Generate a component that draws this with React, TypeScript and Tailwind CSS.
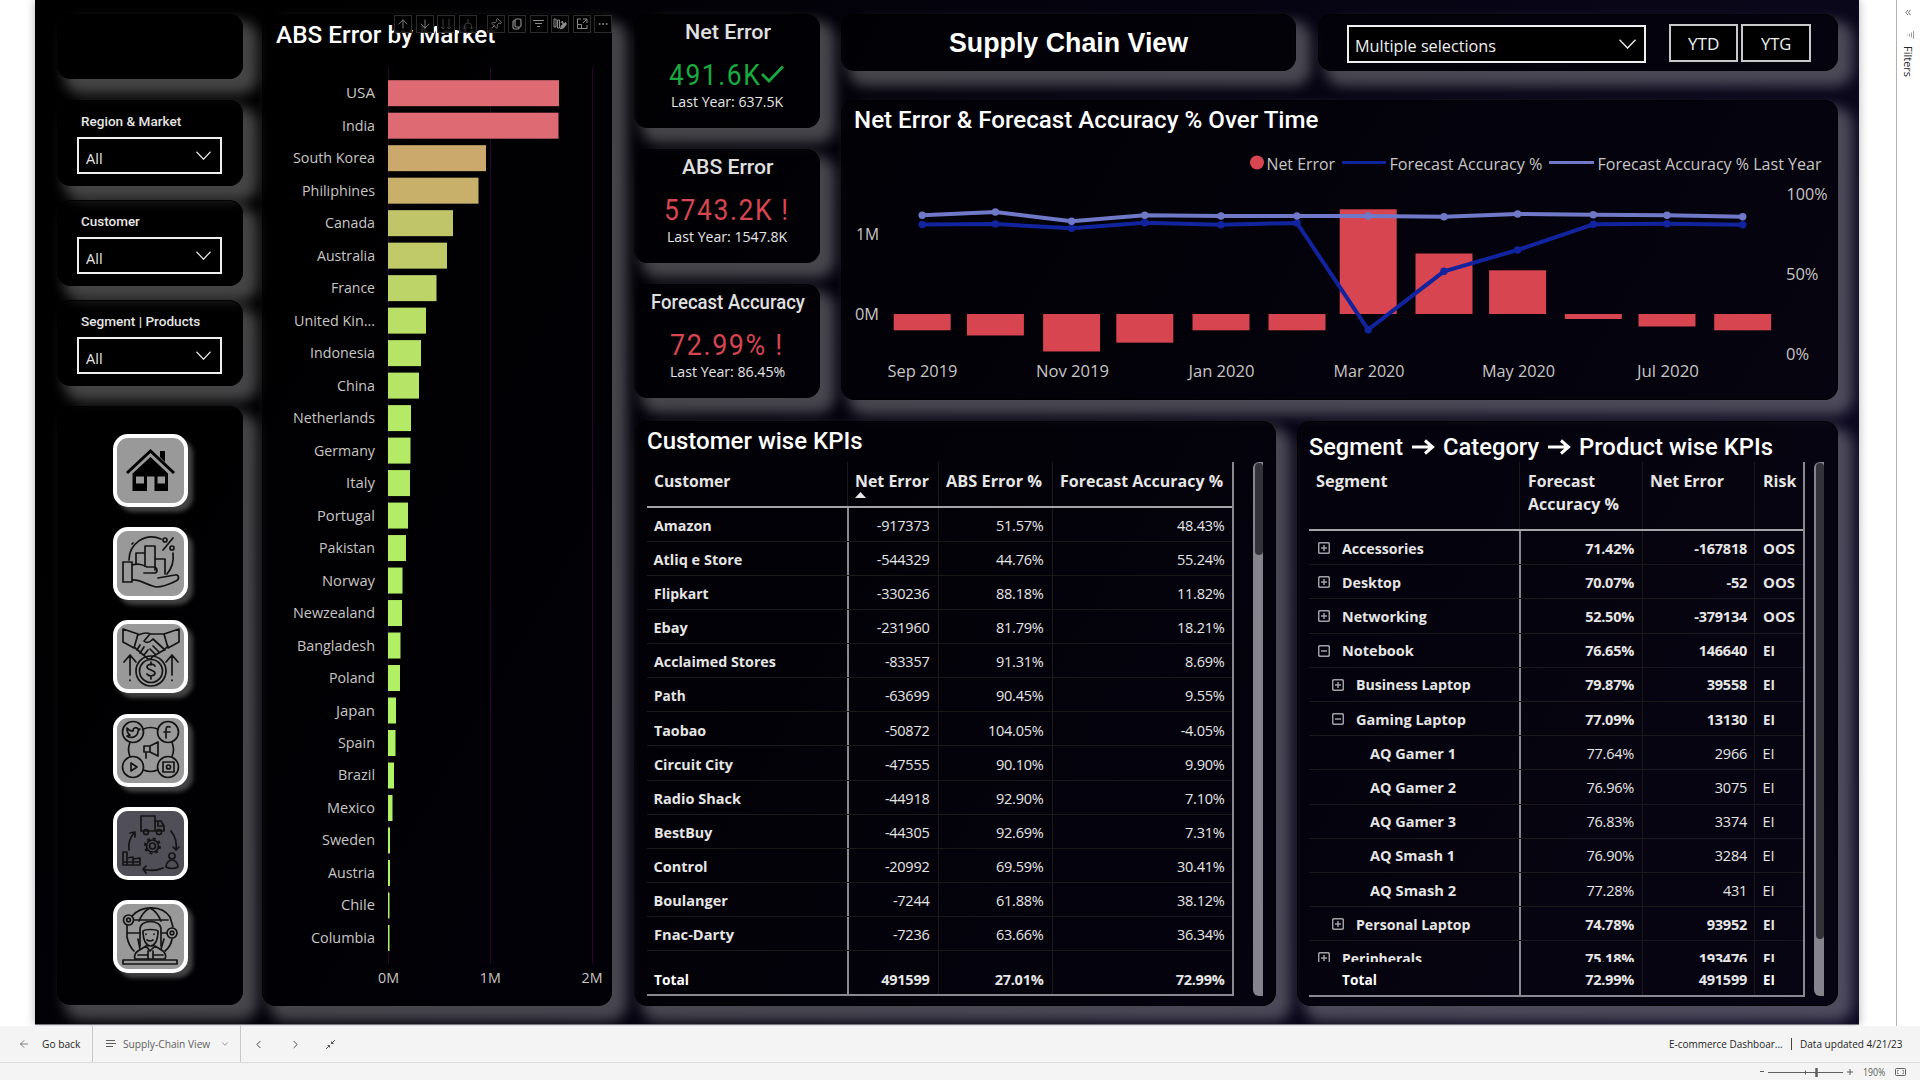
import React, { useLayoutEffect, useRef, useState } from 'react';
import { ArrowUp, ArrowDown, Pin, Ellipsis, ArrowLeft, ChevronDown, ChevronLeft, ChevronRight } from 'lucide-react';

const SEGOE = "font-['Open_Sans','Noto_Sans',sans-serif]";
const DIN = "font-['Roboto',sans-serif]";

/** One line of text stretched or narrowed to an exact width. */
function Fit({ w, className = '', children }: { w: number; className?: string; children: React.ReactNode }) {
  const ref = useRef<HTMLSpanElement>(null);
  const [s, setS] = useState(1);
  useLayoutEffect(() => {
    if (ref.current) setS(w / ref.current.offsetWidth);
  }, [w]);
  return (
    <span className={`inline-block whitespace-nowrap ${className}`} style={{ width: w }}>
      <span ref={ref} className="inline-block origin-left" style={{ transform: `scaleX(${s})` }}>{children}</span>
    </span>
  );
}

function Panel({ className = '', children }: { className?: string; children?: React.ReactNode }) {
  return (
    <div className={`shrink-0 rounded-[14px] border border-black/80 bg-black/45 shadow-[11px_11px_13px_4px_rgba(255,255,255,0.27)] ${className}`}>
      {children}
    </div>
  );
}

function Chevron({ w, h }: { w: number; h: number }) {
  return (
    <svg width={w} height={h} viewBox="0 0 16 9" preserveAspectRatio="none" fill="none" stroke="#e8e8e8" strokeWidth="1.3">
      <path d="M0.5 0.7 8 8.2 15.5 0.7" />
    </svg>
  );
}

function Slicer({ title, w }: { title: string; w: number }) {
  return (
    <Panel className="h-[86px] w-[186px] pl-[19px] pt-[13px]">
      <div className={`h-[16px] pl-1 text-[13px] leading-[16px] font-medium text-[#e6e6e6] ${DIN}`}><Fit w={w}>{title}</Fit></div>
      <div className={`mt-[7px] flex h-[37px] w-[145px] items-center justify-between border-2 border-[#f0f0f0] bg-black pl-[7px] pr-[9px] text-[15px] text-[#e6e6e6] ${SEGOE}`}>
        <span className="pt-[6px]"><Fit w={16.5}>All</Fit></span>
        <Chevron w={15} h={9} />
      </div>
    </Panel>
  );
}

const I = { fill: 'none', stroke: '#141414', strokeWidth: 1.7, strokeLinecap: 'round' as const, strokeLinejoin: 'round' as const };

function HomeIcon() {
  return (
    <svg width="65" height="62" viewBox="0 0 65 62">
      <path d="M9 34 32.5 12 56 34" fill="none" stroke="#000" strokeWidth="3" />
      <path d="M42 12h5v11l-5-5z" />
      <path fillRule="evenodd" d="M32.5 18 50 34.5V52H36.5V37.500H29V52H14.500V34.500zM18 37.500V44.500h8V37.500zM39.500 37.500V44.500h7.500V37.500z" />
    </svg>
  );
}
function FinanceIcon() {
  return (
    <svg width="65" height="62" viewBox="0 0 65 62" {...I}>
      <path d="M5 30h9v20H5zM14 33c7-2 11 0 15 2h7c4 1 4 6 0 6H26M14 48c8-1 14 5 24 7 8 0 14-3 20-6 4-2 3-7-1-6l-17 3" />
      <path d="M18 32V21h9M27 34V14h10v24M37 27h10v15M11 28C11 12 27 0 43 7M14 12l1-1M55 21c1 8-1 15-6 21" />
      <circle cx="47" cy="8" r="2" /><circle cx="54" cy="16" r="2" /><path d="m55 6-10 12" />
    </svg>
  );
}
function SalesIcon() {
  return (
    <svg width="65" height="62" viewBox="0 0 65 62" {...I}>
      <path d="m5 3 15 5-4 14L5 16zM61 3 46 8l4 14 11-6zM20 9c5-2 9-3 12-1l14 0M16 21l13 11c2 2 5 1 5-1l12-7 4-4M32 8l-6 7c3 3 6 1 9-2l12 11M22 19l-3 5M26 21l-4 6M30 24l-4 5M35 20l6 6M32 23l5 5" />
      <circle cx="33" cy="45" r="15" /><circle cx="33" cy="45" r="11.500" />
      <path d="M37 40c-2-3-8-2-8 1s8 3 8 6-6 4-8 1M33 36v3M33 50v3M12 49V29M6 36l6-7 6 7M54 49V29M48 36l6-7 6 7M12 54v.5M54 54v.5" />
    </svg>
  );
}
function MarketingIcon() {
  return (
    <svg width="65" height="62" viewBox="0 0 65 62" {...I}>
      <circle cx="15" cy="13" r="10.500" /><circle cx="50" cy="13" r="10.500" /><circle cx="15" cy="48" r="10.500" /><circle cx="50" cy="48" r="10.500" />
      <path d="M25.500 10q7-3 14 0M25.500 51q7 3 14 0M12 23.500q-3 7 0 14M54 23.500q3 7 0 14" />
      <path d="M9 9c2 3 5 3 6 3 0-4 4-4 5-2l2 0-2 2c0 6-7 8-11 5l3-1c-2-1-3-4-3-7zM52 8c-3-1-4 0-4 3v8M46 13h6M13 44v8l6-4zM45 43h11v10H45z" />
      <circle cx="50.500" cy="48" r="2" /><path d="M26 27h6v6h-6zM32 27l8-4v14l-8-4M28 33v6" />
    </svg>
  );
}
function SupplyIcon() {
  return (
    <svg width="65" height="63" viewBox="0 0 65 63" {...I}>
      <path d="M23 4h14v15H23zM37 9h6l3 5v5h-9M40 9v5h6" />
      <circle cx="28" cy="20" r="2.500" /><circle cx="41" cy="20" r="2.500" />
      <circle cx="34.500" cy="34" r="6" /><circle cx="34.500" cy="34" r="3" />
      <circle cx="34.500" cy="34" r="7.500" strokeWidth="2" strokeDasharray="2.900 3" strokeLinecap="butt" />
      <path d="M11 38c-1-7 1-13 6-18l-5 1M17 20v5M53 19c4 5 6 12 5 19l-3-3M58 38l3-3M45 56c-7 3-14 3-20 1l3-3M25 57l3 4M5 53V40h4v6l6-1v2l7-1v7zM9 46v7M15 47v6M5 50h17" />
      <circle cx="54" cy="44" r="3" /><path d="M48 55c0-4 3-7 6-7s6 3 6 7q-6 3-12 0z" />
    </svg>
  );
}
function ExecutiveIcon() {
  return (
    <svg width="65" height="63" viewBox="0 0 65 63" {...I}>
      <path d="M5 55h54v4H5zM9 20v12c1 5 3 10 7 14M14 11C24 0 44 0 52 12l3 10M54 34c-1 6-3 9-7 12M32 3c-6 3-9 8-11 13M32 3c6 3 9 8 11 13M16 15h34M10 28h12M44 28h5M20 34l2 10M46 34l-3 10" />
      <circle cx="10.500" cy="15" r="5" /><circle cx="10.500" cy="15" r="1.800" /><circle cx="54" cy="28" r="5" /><circle cx="54" cy="28" r="1.800" />
      <path d="M22 41V24c0-10 21-10 21 0v17M25 26c0 20 15 20 15 0-2-2-13-2-15 0zM29 35q3 2 6 0M28 29v.3M36 29v.3M28 41l4 5 5-5 8 5c3 3 3 6 2 8H17c-1-3 0-6 3-8zM30 46v8M35 46v8M20 50h9M36 50h9" />
    </svg>
  );
}

function NavTile({ active, children }: { active?: boolean; children: React.ReactNode }) {
  return (
    <div className={`flex h-[73px] w-[75px] shrink-0 items-center justify-center overflow-hidden rounded-[15px] border-[4.5px] border-white ${active ? 'bg-[#504f57]' : 'bg-[#999] shadow-[5px_5px_4px_rgba(255,255,255,0.26)]'}`}>
      {children}
    </div>
  );
}

const markets: [string, number, string, number][] = [
  ['USA', 171, '#de6a73', 29], ['India', 170.5, '#de6a73', 33], ['South Korea', 98, '#cba86b', 82], ['Philiphines', 90.5, '#c8b06b', 73],
  ['Canada', 65, '#c1c569', 50], ['Australia', 59, '#c0ca69', 58], ['France', 48.5, '#bdd469', 44], ['United Kin...', 38, '#b9df67', 81],
  ['Indonesia', 33, '#b7e366', 65], ['China', 31, '#b6e466', 38], ['Netherlands', 23, '#b4ea66', 82], ['Germany', 22.5, '#b4ea66', 61],
  ['Italy', 22, '#b4eb66', 29], ['Portugal', 20, '#b3ec66', 58], ['Pakistan', 18, '#b3ed66', 56], ['Norway', 14.5, '#b2ef66', 53],
  ['Newzealand', 14, '#b2ef66', 82], ['Bangladesh', 12.5, '#b1f065', 78], ['Poland', 12, '#b1f065', 46], ['Japan', 8, '#b0f265', 39],
  ['Spain', 7.5, '#b0f265', 37], ['Brazil', 6, '#b0f365', 37], ['Mexico', 4.5, '#b0f365', 48], ['Sweden', 2, '#b0f465', 53],
  ['Austria', 2, '#b0f465', 47], ['Chile', 1.5, '#b0f465', 34], ['Columbia', 1.5, '#b0f465', 64],
];

function MarketChart() {
  return (
    <svg width="348" height="944" viewBox="263 50 348 944" className={SEGOE} fontSize="15" fill="#c8c6c4">
      {[388.5, 490.5, 592.5].map((x) => <path key={x} d={`M${x} 67V964`} stroke="#2b0430" />)}
      {markets.map(([n, w, c, tw], i) => {
        const y = 93.2 + i * 32.49;
        return (
          <g key={n}>
            <text x={375 - tw} y={y + 5} textLength={tw} lengthAdjust="spacingAndGlyphs">{n}</text>
            <rect x="388" y={y - 13} width={w} height="26" fill={c} />
          </g>
        );
      })}
      {['0M', '1M', '2M'].map((t, i) => <text key={t} x={378 + i * 101.8} y="983" textLength="21" lengthAdjust="spacingAndGlyphs">{t}</text>)}
    </svg>
  );
}

function ToolBox({ children }: { children?: React.ReactNode }) {
  return <span className="flex h-[18px] w-[18px] items-center justify-center border border-[#2c2c2c] bg-black/90 text-[#8c8c8c]">{children}</span>;
}

function VisualToolbar() {
  return (
    <div className="absolute top-0 -right-px flex">
      <div className="flex gap-[3.500px]">
        <ToolBox><ArrowUp size={14} strokeWidth={1.5} /></ToolBox>
        <ToolBox><ArrowDown size={14} strokeWidth={1.5} /></ToolBox>
        <ToolBox>
          <svg width="12" height="12" viewBox="0 0 12 12" fill="none" stroke="#3c3c3c"><path d="M3 1v10M1 9l2 2 2-2M9 1v10M7 9l2 2 2-2" /></svg>
        </ToolBox>
        <ToolBox>
          <svg width="12" height="12" viewBox="0 0 12 12" fill="none" stroke="#3c3c3c"><path d="M6 1v4M2.500 11V7.500Q2.500 5 6 5t3.500 2.500V11M1 9.500l1.500 1.500L4 9.500M8 9.500 9.500 11 11 9.500" /></svg>
        </ToolBox>
      </div>
      <div className="ml-[10px] flex gap-[3.500px]">
        <ToolBox><Pin size={12} strokeWidth={1.7} className="rotate-45" /></ToolBox>
        <ToolBox>
          <svg width="12" height="12" viewBox="0 0 12 12" fill="none" stroke="currentColor" strokeWidth="1.200"><rect x="4" y="1" width="6" height="8" rx="1.500" /><path d="M4 2.500C2 2.500 2 4 2 5v4c0 2 1 2 4 2 2 0 2 0 2-2" /></svg>
        </ToolBox>
        <ToolBox>
          <svg width="11" height="8" viewBox="0 0 11 8" stroke="currentColor"><path d="M0 .5h11M2 3.500h7M4 6.500h3" /></svg>
        </ToolBox>
        <ToolBox>
          <svg width="14" height="12" viewBox="0 0 14 12" fill="none" stroke="currentColor"><path d="M1 1h2v8H1zM4.500 2h2v8h-2z" /><path d="M8 4.500 9.500 3l1 3.500M7.500 11l1-3.500 4-3 1 1.500-3 4z" fill="currentColor" /></svg>
        </ToolBox>
        <ToolBox>
          <svg width="12" height="12" viewBox="0 0 12 12" fill="none" stroke="currentColor"><path d="M5 1H1.500v9.500H11V7M7 1h4v4M11 1 7 5M1.500 6.500h4v4" /></svg>
        </ToolBox>
        <ToolBox><Ellipsis size={12} strokeWidth={2} /></ToolBox>
      </div>
    </div>
  );
}

function Kpi({ title, tw, value, vw, mark, ly, lw, bad }: { title: string; tw: number; value: string; vw: number; mark: React.ReactNode; ly: string; lw: number; bad?: boolean }) {
  return (
    <Panel className="flex h-[114px] w-[186px] flex-col items-center">
      <div className={`mt-[5px] ml-[2px] h-[24px] text-[20px] leading-[24px] font-medium text-[#e0e0e0] ${DIN}`}><Fit w={tw}>{title}</Fit></div>
      <div className={`mt-[14px] flex h-[34px] items-center text-[29px] leading-[34px] tracking-[0.06em] ${DIN} ${bad ? 'text-[#d64550]' : 'text-[#1aab40]'}`}>
        <Fit w={vw}>{value}</Fit>{mark}
      </div>
      <div className={`h-[20px] text-[14px] leading-[20px] text-[#e6e6e6] ${SEGOE}`}><Fit w={lw}>{ly}</Fit></div>
    </Panel>
  );
}

const px = [922.2, 995.4, 1071.6, 1144.8, 1221, 1297, 1368.2, 1444, 1517.6, 1593.3, 1667, 1742.7];
const lastYear = [215.3, 212, 221.3, 215.3, 216, 216, 216, 216.7, 214, 214.7, 215.3, 216.7];
const accuracy = [224.5, 224, 228.3, 222.7, 224.7, 223, 329.7, 271.3, 250, 224.3, 223.7, 224.7];
const netError = [330.3, 335.5, 351.5, 342.7, 330.3, 330.3, 209.3, 253.5, 270.3, 319, 326.5, 330.3];

function Series({ ys, color }: { ys: number[]; color: string }) {
  return (
    <g>
      <polyline points={ys.map((y, i) => `${px[i]},${y}`).join(' ')} fill="none" stroke={color} strokeWidth="4" strokeLinejoin="round" />
      {ys.map((y, i) => <circle key={i} cx={px[i]} cy={y} r="3.700" fill={color} />)}
    </g>
  );
}

function L({ x, y, w, children }: { x: number; y: number; w: number; children: string }) {
  return <text x={x} y={y + 5.7} textLength={w} lengthAdjust="spacingAndGlyphs">{children}</text>;
}

function TimeChart() {
  return (
    <svg width="995" height="260" viewBox="842 136 995 260" className={SEGOE} fontSize="16" fill="#c8c6c4">
      <circle cx="1257" cy="162.500" r="7" fill="#d64550" />
      <path d="M1342 162.500h44" stroke="#12239e" strokeWidth="3" />
      <path d="M1549 162.500h45" stroke="#7078c8" strokeWidth="3" />
      <L x={1266.5} y={164} w={68.5}>Net Error</L>
      <L x={1389.5} y={164} w={153}>Forecast Accuracy %</L>
      <L x={1597.5} y={164} w={224}>Forecast Accuracy % Last Year</L>
      {netError.map((y, i) => <rect key={i} x={px[i] - 28.5} y={Math.min(y, 314)} width="57" height={Math.abs(y - 314)} fill="#d64550" />)}
      <Series ys={accuracy} color="#12239e" />
      <Series ys={lastYear} color="#7078c8" />
      <L x={856} y={234} w={23}>1M</L>
      <L x={855} y={314} w={24}>0M</L>
      <L x={1786.5} y={194} w={41}>100%</L>
      <L x={1786} y={274} w={32.5}>50%</L>
      <L x={1786} y={354} w={23}>0%</L>
      <L x={887.5} y={371} w={70}>Sep 2019</L>
      <L x={1036} y={371} w={73}>Nov 2019</L>
      <L x={1188.5} y={371} w={66}>Jan 2020</L>
      <L x={1333.5} y={371} w={71}>Mar 2020</L>
      <L x={1482} y={371} w={73}>May 2020</L>
      <L x={1637} y={371} w={62}>Jul 2020</L>
    </svg>
  );
}

const customers: [string, number, string, string, string][] = [
  ['Amazon', 58, '-917373', '51.57%', '48.43%'], ['Atliq e Store', 89, '-544329', '44.76%', '55.24%'], ['Flipkart', 55, '-330236', '88.18%', '11.82%'],
  ['Ebay', 34, '-231960', '81.79%', '18.21%'], ['Acclaimed Stores', 122, '-83357', '91.31%', '8.69%'], ['Path', 32, '-63699', '90.45%', '9.55%'],
  ['Taobao', 52, '-50872', '104.05%', '-4.05%'], ['Circuit City', 79, '-47555', '90.10%', '9.90%'], ['Radio Shack', 87, '-44918', '92.90%', '7.10%'],
  ['BestBuy', 58, '-44305', '92.69%', '7.31%'], ['Control', 54, '-20992', '69.59%', '30.41%'], ['Boulanger', 74, '-7244', '61.88%', '38.12%'],
  ['Fnac-Darty', 80, '-7236', '63.66%', '36.34%'],
];

const NUM = 'flex items-center justify-end text-[14.500px] tracking-[-0.25px] text-[#e6e6e6]';
const GRID = 'border-[#1b1a19]';

function CustomerTable() {
  return (
    <div className={`w-[587px] border-r-2 border-b-2 border-[#8a8a8e] ${SEGOE}`}>
      <div className="flex h-[45.500px] border-b-2 border-[#a5a5a8] text-[15.500px] leading-[20px] font-bold text-[#e6e6e6]">
        <div className={`w-[201px] border-r ${GRID} pt-[9px] pl-[7px]`}><Fit w={77}>Customer</Fit></div>
        <div className={`w-[91px] border-r ${GRID} pt-[9px] pl-[7px]`}>
          <Fit w={74}>Net Error</Fit>
          <svg width="11" height="6" viewBox="0 0 11 6" className="mt-px block" fill="#e6e6e6"><path d="M0 6 5.500 0 11 6z" /></svg>
        </div>
        <div className={`w-[114px] border-r ${GRID} pt-[9px] pl-[7.500px]`}><Fit w={96}>ABS Error %</Fit></div>
        <div className="pt-[9px] pl-[7px]"><Fit w={163}>Forecast Accuracy %</Fit></div>
      </div>
      {customers.map(([n, w, a, b, c]) => (
        <div key={n} className={`flex h-[34.150px] border-b ${GRID}`}>
          <div className="flex w-[202px] items-center border-r-2 border-[#8a8a8e] pt-[3px] pl-[7px] text-[14.500px] font-bold text-[#e6e6e6]"><Fit w={w}>{n}</Fit></div>
          <div className={`w-[90px] border-r ${GRID} pt-[3px] pr-[8px] ${NUM}`}>{a}</div>
          <div className={`w-[114px] border-r ${GRID} pt-[3px] pr-[8px] ${NUM}`}>{b}</div>
          <div className={`grow pt-[3px] pr-[7px] ${NUM}`}>{c}</div>
        </div>
      ))}
      <div className="flex h-[43px] font-bold text-white">
        <div className="flex w-[202px] items-center border-r-2 border-[#8a8a8e] pt-[14px] pl-[7px] text-[14.500px]"><Fit w={35}>Total</Fit></div>
        <div className={`w-[90px] border-r ${GRID} pt-[14px] pr-[8px] ${NUM}`}>491599</div>
        <div className={`w-[114px] border-r ${GRID} pt-[14px] pr-[8px] ${NUM}`}>27.01%</div>
        <div className={`grow pt-[14px] pr-[7px] ${NUM}`}>72.99%</div>
      </div>
    </div>
  );
}

const segments: [string, number, number, string | null, string, string, string][] = [
  ['Accessories', 82, 0, '+', '71.42%', '-167818', 'OOS'], ['Desktop', 59, 0, '+', '70.07%', '-52', 'OOS'], ['Networking', 85, 0, '+', '52.50%', '-379134', 'OOS'],
  ['Notebook', 72, 0, '-', '76.65%', '146640', 'EI'], ['Business Laptop', 115, 1, '+', '79.87%', '39558', 'EI'], ['Gaming Laptop', 110, 1, '-', '77.09%', '13130', 'EI'],
  ['AQ Gamer 1', 86, 2, null, '77.64%', '2966', 'EI'], ['AQ Gamer 2', 86, 2, null, '76.96%', '3075', 'EI'], ['AQ Gamer 3', 86, 2, null, '76.83%', '3374', 'EI'],
  ['AQ Smash 1', 85, 2, null, '76.90%', '3284', 'EI'], ['AQ Smash 2', 86, 2, null, '77.28%', '431', 'EI'], ['Personal Laptop', 115, 1, '+', '74.78%', '93952', 'EI'],
  ['Peripherals', 80, 0, '+', '75.18%', '193476', 'EI'],
];
const INDENT = ['pl-[9px]', 'pl-[23px]', 'pl-[37px]'];

function SegmentTable() {
  return (
    <div className={`h-[535px] w-[496px] border-r-2 border-b-2 border-[#8a8a8e] ${SEGOE}`}>
      <div className="flex h-[69px] border-b-2 border-[#a5a5a8] text-[15.500px] leading-[23px] font-bold text-[#e6e6e6]">
        <div className={`w-[211px] border-r ${GRID} pt-[8px] pl-[7px]`}><Fit w={72}>Segment</Fit></div>
        <div className={`w-[123px] border-r ${GRID} pt-[8px] pl-[8px]`}><Fit w={67}>Forecast</Fit><Fit w={91}>Accuracy %</Fit></div>
        <div className={`w-[112px] border-r ${GRID} pt-[8px] pl-[7px]`}><Fit w={74}>Net Error</Fit></div>
        <div className="pt-[8px] pl-[8px]"><Fit w={33}>Risk</Fit></div>
      </div>
      <div className="h-[431px] overflow-hidden">
        {segments.map(([n, w, lvl, box, a, b, r]) => (
          <div key={n} className={`flex h-[34.200px] border-b ${GRID} ${lvl < 2 ? 'font-bold' : ''}`}>
            <div className={`flex w-[212px] items-center border-r-2 border-[#8a8a8e] text-[14.500px] font-bold text-[#e6e6e6] ${INDENT[lvl]}`}>
              <span className="mr-[12px] w-[12px] pt-px">
                {box && (
                  <svg width="12" height="12" viewBox="0 0 12 12" fill="none" stroke="#a0a0a5" strokeWidth="1.500" className="block">
                    <rect x="0.700" y="0.700" width="10.600" height="10.600" rx="1.500" />
                    <path d={box === '+' ? 'M3 6h6M6 3v6' : 'M3 6h6'} />
                  </svg>
                )}
              </span>
              <span className="pt-[2px]"><Fit w={w}>{n}</Fit></span>
            </div>
            <div className={`w-[122px] border-r ${GRID} pt-[2px] pr-[8px] ${NUM}`}>{a}</div>
            <div className={`w-[112px] border-r ${GRID} pt-[2px] pr-[7px] ${NUM}`}>{b}</div>
            <div className="flex items-center pt-[2px] pl-[7.500px] text-[14.500px] text-[#e6e6e6]"><Fit w={r === 'EI' ? 12 : 32}>{r}</Fit></div>
          </div>
        ))}
      </div>
      <div className="flex h-[33px] font-bold text-white">
        <div className="flex w-[212px] items-center border-r-2 border-[#8a8a8e] pt-[2px] pl-[33px] text-[14.500px]"><Fit w={35}>Total</Fit></div>
        <div className={`w-[122px] border-r ${GRID} pt-[2px] pr-[8px] ${NUM}`}>72.99%</div>
        <div className={`w-[112px] border-r ${GRID} pt-[2px] pr-[7px] ${NUM}`}>491599</div>
        <div className="flex items-center pt-[2px] pl-[7.500px] text-[14.500px]"><Fit w={12}>EI</Fit></div>
      </div>
    </div>
  );
}

function Scrollbar({ thumb }: { thumb: string }) {
  return (
    <div className="h-[534px] w-[10px] rounded-l-[6px] bg-[#85838c] pt-[1px] pl-[2px]">
      <div className={`rounded-[4px] bg-[#333238] ${thumb}`} />
    </div>
  );
}

function BoldArrow() {
  return (
    <svg width="23" height="18" viewBox="0 0 23 18" fill="none" stroke="#fff" strokeWidth="3" className="shrink-0"><path d="M0 8h20M13 1.500 20.500 8 13 14.500" /></svg>
  );
}

export default function App() {
  return (
    <div className={`flex h-[1080px] w-[1920px] flex-col overflow-hidden bg-white ${SEGOE}`}>
      <div className="flex h-[1026px] shrink-0 overflow-hidden">
        <div className="relative ml-[35px] h-[1024.500px] w-[1824px] shrink-0 border-b border-[#77757f] shadow-[0_0_9px_rgba(0,0,0,0.3)]">
          <div className="flex h-full w-full gap-[19px] overflow-hidden bg-[linear-gradient(120deg,#000_0%,#000_12%,#05030f_45%,#0e0a24_100%)] pt-[14px] pl-[22px]">
            <div className="flex w-[186px] shrink-0 flex-col">
              <Panel className="h-[65px] w-[186px]" />
              <div className="mt-[20.500px] flex flex-col gap-[14px]">
                <Slicer title="Region & Market" w={100} />
                <Slicer title="Customer" w={59} />
                <Slicer title="Segment | Products" w={119} />
              </div>
              <Panel className="mt-[20.500px] flex h-[599px] w-[186px] flex-col items-center gap-[20.400px] pt-[26.500px]">
                <NavTile><HomeIcon /></NavTile>
                <NavTile><FinanceIcon /></NavTile>
                <NavTile><SalesIcon /></NavTile>
                <NavTile><MarketingIcon /></NavTile>
                <NavTile active><SupplyIcon /></NavTile>
                <NavTile><ExecutiveIcon /></NavTile>
              </Panel>
            </div>

            <Panel className="relative h-[992px] w-[350px]">
              <div className={`h-[35px] pt-[6px] pl-[12.500px] text-[23px] leading-[30px] font-medium text-white ${DIN}`}><Fit w={219}>ABS Error by Market</Fit></div>
              <MarketChart />
              <VisualToolbar />
            </Panel>

            <div className="ml-[3px] flex flex-col gap-[21px]">
              <div className="flex gap-[20.500px]">
                <div className="flex flex-col gap-[21.200px]">
                  <Kpi title="Net Error" tw={86} value="491.6K" vw={92} ly="Last Year: 637.5K" lw={112}
                    mark={<svg width="24" height="20" viewBox="0 0 24 20" fill="none" stroke="currentColor" strokeWidth="2.800"><path d="M1 9 8 16 22 1.500" /></svg>} />
                  <Kpi bad title="ABS Error" tw={92} value="5743.2K !" vw={126} ly="Last Year: 1547.8K" lw={120} mark={null} />
                  <Kpi bad title="Forecast Accuracy" tw={154} value="72.99% !" vw={114} ly="Last Year: 86.45%" lw={115} mark={null} />
                </div>
                <div className="flex flex-col gap-[29px]">
                  <div className="flex gap-[22px]">
                    <Panel className="flex h-[57px] w-[455.500px] items-center justify-center text-[27px] leading-none font-bold text-white">
                      <span className="pt-px font-['Liberation_Sans',sans-serif]"><Fit w={239}>Supply Chain View</Fit></span>
                    </Panel>
                    <Panel className="flex h-[57px] w-[520px] items-start pt-[9px] pl-[27.500px] text-[16px] text-[#f0f0f0]">
                      <div className="mt-px flex h-[38px] w-[299px] items-center justify-between border-2 border-[#f0f0f0] bg-black pr-[8px] pl-[6px]">
                        <span className="pt-[3px]"><Fit w={141}>Multiple selections</Fit></span>
                        <Chevron w={17} h={10} />
                      </div>
                      <div className="ml-[23px] flex h-[38px] w-[69px] items-center justify-center border-2 border-[#c8c8c8] bg-black pt-[2px]"><Fit w={31}>YTD</Fit></div>
                      <div className="ml-[3px] flex h-[38px] w-[70px] items-center justify-center border-2 border-[#c8c8c8] bg-black pt-[2px]"><Fit w={30}>YTG</Fit></div>
                    </Panel>
                  </div>
                  <Panel className="h-[300px] w-[997.500px]">
                    <div className={`h-[35px] pt-[5px] pl-[12.500px] text-[23px] leading-[30px] font-medium text-white ${DIN}`}><Fit w={464}>Net Error &amp; Forecast Accuracy % Over Time</Fit></div>
                    <TimeChart />
                  </Panel>
                </div>
              </div>
              <div className="flex gap-[21.500px]">
                <Panel className="h-[585px] w-[641.500px] pl-[11.500px]">
                  <div className={`h-[40px] pt-[5px] text-[23px] leading-[30px] font-medium text-white ${DIN}`}><Fit w={216}>Customer wise KPIs</Fit></div>
                  <div className="flex gap-[19px]"><CustomerTable /><Scrollbar thumb="h-[92px]" /></div>
                </Panel>
                <Panel className="h-[585px] w-[541px] pl-[11px]">
                  <div className={`flex h-[40px] items-center gap-[8.500px] pt-[12px] text-[23px] leading-[30px] font-medium text-white ${DIN}`}>
                    <Fit w={94}>Segment</Fit><BoldArrow /><Fit w={96}>Category</Fit><BoldArrow /><Fit w={194}>Product wise KPIs</Fit>
                  </div>
                  <div className="flex gap-[9px]"><SegmentTable /><Scrollbar thumb="h-[476px]" /></div>
                </Panel>
              </div>
            </div>
          </div>
        </div>
        <div className="ml-auto flex w-[24.500px] shrink-0 flex-col items-center border-l border-[#b3b0ad] bg-white pt-[9px] text-[#605e5c]">
          <svg width="6" height="7" viewBox="0 0 7 8" fill="none" stroke="currentColor"><path d="M3.500 1 1 4l2.500 3M6.500 1 4 4l2.500 3" /></svg>
          <svg width="7" height="8" viewBox="0 0 7 8" fill="none" stroke="#a0a0a0" className="mt-[15px] ml-[4px]"><path d="M6.500 0v8M4.500 1.500v5M2.500 2.500v3M.5 3.500v1" /></svg>
          <div className="mt-[7px] text-[11px] leading-[12px] font-medium text-[#252423] [writing-mode:vertical-rl]">Filters</div>
        </div>
      </div>

      <div className="flex h-[37px] shrink-0 items-center border-b border-[#dcdcdc] bg-[#f4f4f4] text-[11px] text-[#252423]">
        <div className="flex h-full w-[93px] items-center gap-[12px] border-r border-[#c8c8c8] pl-[18px]"><ArrowLeft size={12} strokeWidth={1.5} className="text-[#605e5c]" /><Fit w={38}>Go back</Fit></div>
        <div className="flex h-full w-[148px] items-center border-r border-[#c8c8c8] pl-[13px] text-[#605e5c]">
          <svg width="10" height="8" viewBox="0 0 10 8" stroke="currentColor"><path d="M0 .5h9M0 3.500h10M0 6.500h7" /></svg>
          <span className="ml-[7px]"><Fit w={87}>Supply-Chain View</Fit></span>
          <ChevronDown size={10} strokeWidth={1.5} className="ml-[10px]" />
        </div>
        <ChevronLeft size={13} strokeWidth={1.5} className="ml-[11px]" />
        <ChevronRight size={13} strokeWidth={1.5} className="ml-[24px]" />
        <svg width="9" height="9" viewBox="0 0 9 9" fill="none" stroke="#444" strokeWidth=".9" className="ml-[24px]"><path d="M9 0 5.500 3.500M5.500 1.500v2H7.500M0 9l3.500-3.500M1.500 5.500h2v2" /></svg>
        <div className="ml-auto flex items-center pr-[17px]">
          <Fit w={114}>E-commerce Dashboar...</Fit>
          <span className="mx-[8px] h-[12px] w-px bg-[#444]" />
          <Fit w={103}>Data updated 4/21/23</Fit>
        </div>
      </div>
      <div className="flex h-[17px] shrink-0 items-center justify-end bg-[#f4f4f4] pr-[14px] text-[10px] leading-none text-[#605e5c]">
        <span className="mr-[4px] h-px w-[4px] bg-[#605e5c]" />
        <svg width="75" height="10" viewBox="0 0 75 10" stroke="#605e5c"><path d="M0 5.500h75M37.500 3.500v4" /><path d="M48.500 1v9" strokeWidth="2.500" /></svg>
        <svg width="6" height="6" viewBox="0 0 6 6" stroke="#605e5c" className="ml-[4px]"><path d="M0 3h6M3 0v6" /></svg>
        <span className="ml-[10px]"><Fit w={22}>190%</Fit></span>
        <svg width="11" height="8" viewBox="0 0 11 8" fill="none" stroke="#605e5c" className="ml-[10px]"><rect x=".5" y=".5" width="10" height="7" rx="1" /><path d="M2.500 3.500v-1h1M8.500 3.500v-1h-1M2.500 4.500v1h1M8.500 4.500v1h-1" /></svg>
      </div>
    </div>
  );
}
